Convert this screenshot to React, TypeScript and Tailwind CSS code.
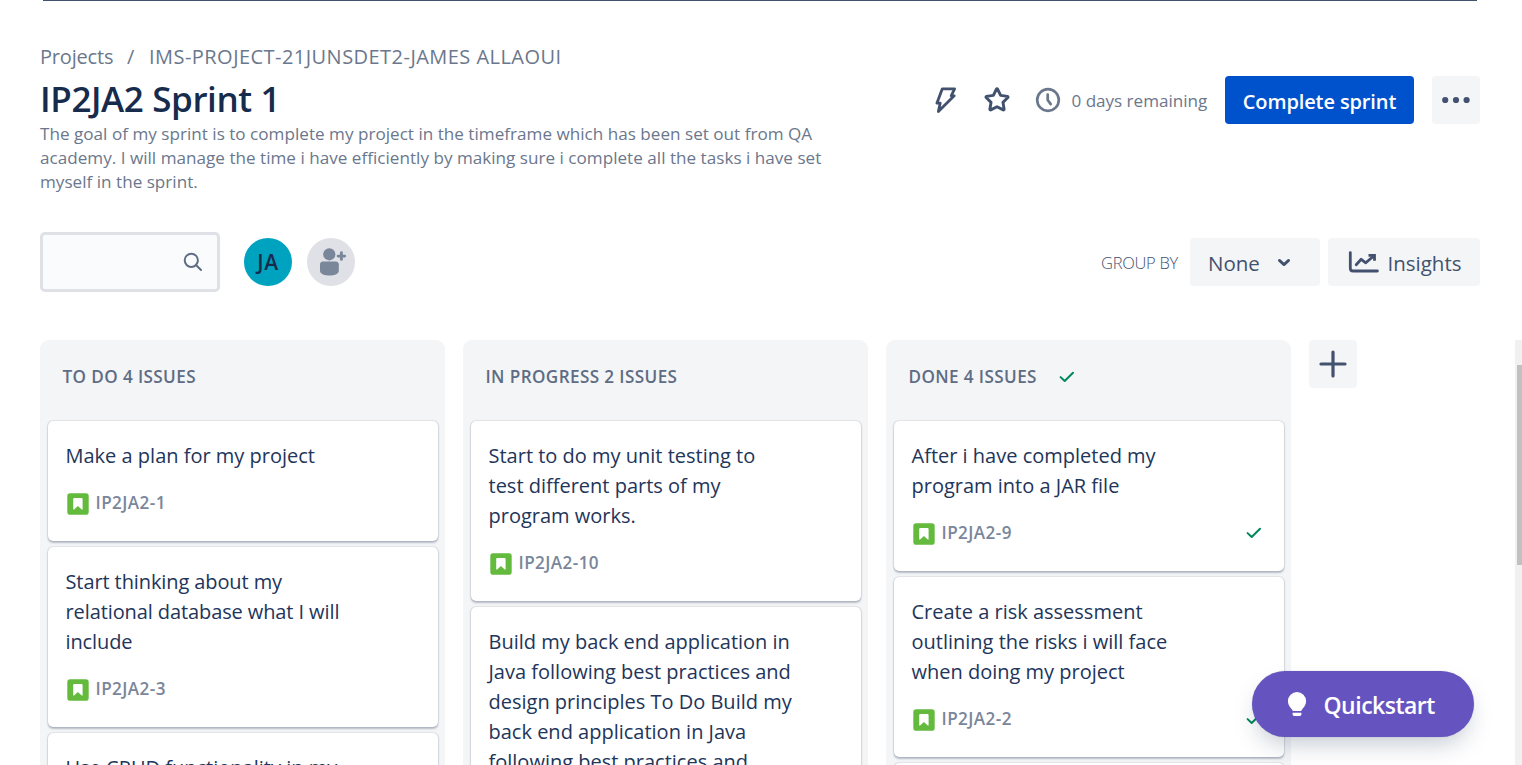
import type { ReactNode } from "react";

type Issue = { id: string; lines: string[]; tight?: boolean };
type ColumnData = { title: string; done?: boolean; issues: Issue[] };

const columns: ColumnData[] = [
  {
    title: "TO DO 4 ISSUES",
    issues: [
      { id: "IP2JA2-1", lines: ["Make a plan for my project"] },
      { id: "IP2JA2-3", tight: true, lines: ["Start thinking about my", "relational database what I will", "include"] },
      { id: "", lines: ["Use CRUD functionality in my"] },
    ],
  },
  {
    title: "IN PROGRESS 2 ISSUES",
    issues: [
      { id: "IP2JA2-10", lines: ["Start to do my unit testing to", "test different parts of my", "program works."] },
      {
        id: "",
        lines: [
          "Build my back end application in",
          "Java following best practices and",
          "design principles To Do Build my",
          "back end application in Java",
          "following best practices and",
        ],
      },
    ],
  },
  {
    title: "DONE 4 ISSUES",
    done: true,
    issues: [
      { id: "IP2JA2-9", lines: ["After i have completed my", "program into a JAR file"] },
      {
        id: "IP2JA2-2",
        lines: ["Create a risk assessment", "outlining the risks i will face", "when doing my project"],
      },
      { id: "", lines: [] },
    ],
  },
];

function Check() {
  return (
    <svg width="16" height="12" viewBox="0 0 16 12" fill="none" stroke="#00875a" strokeWidth="2" strokeLinecap="round" strokeLinejoin="round">
      <path d="M1.6 6.1 5.7 10 14 1.8" />
    </svg>
  );
}

function StoryIcon() {
  return (
    <svg width="22" height="22" viewBox="0 0 22 22">
      <rect x="0.3" y="0.3" width="21.4" height="21.4" rx="2.8" fill="#63ba3c" />
      <path d="M6.2 16.1V6.3c0-.8.5-1.3 1.3-1.3h6.8c.8 0 1.3.5 1.3 1.3v9.8c0 .5-.5.7-.9.4L10.9 13l-3.8 3.5c-.4.3-.9.1-.9-.4z" fill="#fff" />
    </svg>
  );
}

function Card({ issue, done }: { issue: Issue; done?: boolean }) {
  return (
    <article className="rounded-[5px] bg-white pt-5 pb-6 pl-[17.5px] pr-[22px] shadow-[0_1.5px_2px_rgba(9,30,66,0.25),0_0_1.5px_rgba(9,30,66,0.31)]">
      <div className={`text-[20px] leading-[30px] whitespace-nowrap text-[#22355a] ${issue.tight ? "tracking-[-0.1px]" : "tracking-normal"}`}>
        {issue.lines.map((line, i) => (
          <div key={i}>{line}</div>
        ))}
      </div>
      <div className="mt-[19px] flex h-[27px] items-center justify-between">
        <div className="flex items-center gap-[6.5px] pl-[1.5px]">
          <StoryIcon />
          <span className="pb-[2px] text-[17.1px] leading-[25px] font-semibold tracking-[0.42px] text-[#7a869a]">{issue.id}</span>
        </div>
        {done && (
          <span className="pb-[2px]">
            <Check />
          </span>
        )}
      </div>
    </article>
  );
}

function Column({ column }: { column: ColumnData }) {
  return (
    <section className="w-[405px] shrink-0 rounded-t-[9px] bg-[#f4f5f7] px-2">
      <header className="flex h-[81px] items-start gap-[22px] pt-[25px] pl-[14.5px]">
        <h2 className="text-[17.1px] leading-6 font-semibold tracking-[0.4px] text-[#5e6c84]">{column.title}</h2>
        {column.done && (
          <span className="flex h-6 items-center">
            <Check />
          </span>
        )}
      </header>
      <div className="flex w-[390px] flex-col gap-1.5">
        {column.issues.map((issue, i) => (
          <Card key={i} issue={issue} done={column.done} />
        ))}
      </div>
    </section>
  );
}

function GreyButton({ className, children }: { className: string; children: ReactNode }) {
  return (
    <button className={`flex h-12 items-center rounded-[4px] bg-[#f4f5f7] text-[20.5px] leading-[48px] font-medium text-[#42526e] ${className}`}>
      {children}
    </button>
  );
}

export default function App() {
  return (
    <div className="relative flex h-[765px] w-[1522px] flex-col overflow-hidden bg-white pl-10 font-['Open_Sans',sans-serif]">
      <div className="ml-[3px] h-px w-[1434px] shrink-0 bg-[#42526e]" />

      <div className="flex h-[231px] w-[1440px] shrink-0 justify-between">
        <div className="pt-[41px]">
          <nav className="flex h-[30px] text-[20px] leading-[30px] text-[#6b778c]">
            <span className="w-[87px] tracking-[-0.19px]">Projects</span>
            <span className="w-[22px]">/</span>
            <span className="tracking-[0.46px]">IMS-PROJECT-21JUNSDET2-JAMES ALLAOUI</span>
          </nav>
          <h1 className="mt-1 h-[46px] text-[35px] leading-[45px] font-semibold tracking-[-0.4px] text-[#172b4d]">
            IP2JA2 Sprint 1
          </h1>
          <p className="text-[17.1px] leading-6 tracking-[0.015px] whitespace-nowrap text-[#6b778c]">
            The goal of my sprint is to complete my project in the timeframe which has been set out from QA
            <br />
            academy. I will manage the time i have efficiently by making sure i complete all the tasks i have set
            <br />
            myself in the sprint.
          </p>
        </div>

        <div className="mt-[75px] flex h-12 items-center">
          <svg className="mr-[25px]" width="24" height="28" viewBox="0 0 24 28" fill="none" stroke="#42526e" strokeWidth="2.8" strokeLinejoin="round">
            <path d="M8.3 2.8H20.6L17.2 9.8H20.2L4.4 25.4L6.2 17.2H2.9Z" />
          </svg>
          <svg className="mr-6" width="28" height="28" viewBox="0 0 24 24" fill="none" stroke="#42526e" strokeWidth="2.5" strokeLinejoin="round">
            <path d="M11.5 2.6a.6.6 0 0 1 1 0l2.6 5.4 5.9.9a.6.6 0 0 1 .3 1l-4.2 4.1 1 5.9a.6.6 0 0 1-.8.6L12 17.8l-5.3 2.7a.6.6 0 0 1-.8-.6l1-5.9-4.2-4.1a.6.6 0 0 1 .3-1l5.9-.9z" />
          </svg>
          <svg className="mr-[10.500px]" width="26" height="26" viewBox="0 0 26 26" fill="none" stroke="#6b778c" strokeWidth="2.7" strokeLinecap="round">
            <circle cx="13" cy="13" r="10.8" />
            <path d="M12.7 7.6V13l3 4.1" strokeLinejoin="round" />
          </svg>
          <span className="mr-[18px] w-[135.500px] pt-0.5 text-[17.1px] leading-6 tracking-[-0.03px] whitespace-nowrap text-[#6b778c]">0 days remaining</span>
          <button className="mr-[18px] h-12 w-[189px] rounded-[4px] bg-[#0052cc] pt-[3px] text-[20px] leading-[45px] font-semibold tracking-[-0.12px] text-white">
            Complete sprint
          </button>
          <GreyButton className="w-12 justify-center">
            <svg width="30" height="8" viewBox="0 0 30 8" fill="#42526e">
              <circle cx="4.2" cy="4" r="3.1" />
              <circle cx="15" cy="4" r="3.1" />
              <circle cx="25.6" cy="4" r="3.1" />
            </svg>
          </GreyButton>
        </div>
      </div>

      <div className="flex h-[60px] w-[1440px] shrink-0 items-center">
        <div className="mr-6 flex h-[60px] w-[180px] items-center justify-end rounded-[5px] border-[3px] border-[#dfe1e6] bg-[#fafbfc] pr-[14px]">
          <svg width="20" height="20" viewBox="0 0 20 20" fill="none" stroke="#5e6c84" strokeWidth="2" strokeLinecap="round">
            <circle cx="8.3" cy="8.3" r="6.6" />
            <path d="m13.2 13.2 4.8 4.8" />
          </svg>
        </div>
        <div className="mr-[15px] flex size-12 items-center justify-center rounded-full bg-[#00a3bf] text-[21px] leading-none font-semibold tracking-[0.6px] text-[#172b4d]">
          JA
        </div>
        <svg width="48" height="48" viewBox="0 0 48 48">
          <circle cx="24" cy="24" r="24" fill="#dfe1e6" />
          <g fill="#7a869a">
            <circle cx="22.3" cy="16.3" r="6.1" />
            <path d="M13 26.3c0-1.7 1.3-2.8 2.9-2.8h13c1.6 0 2.9 1.1 2.9 2.8v6.4c0 3.3-5 4.9-9.4 4.9S13 36 13 32.7z" />
          </g>
          <path d="M34.400 14.800v6.600M31.100 18.100h6.600" stroke="#7a869a" strokeWidth="2.900" strokeLinecap="round" />
        </svg>

        <span className="ml-auto mr-3 w-[77px] pt-[2px] text-[16.5px] leading-6 font-light tracking-[-0.28px] whitespace-nowrap text-[#42526e]">
          GROUP BY
        </span>
        <GreyButton className="mr-2 w-[130px] gap-[17px] pl-[18px]">
          <span className="pt-0.5">None</span>
          <svg width="14" height="9" viewBox="0 0 14 9" fill="none" stroke="#42526e" strokeWidth="2.8" strokeLinecap="round" strokeLinejoin="round">
            <path d="M2.4 2.4 7 6.6l4.6-4.2" />
          </svg>
        </GreyButton>
        <GreyButton className="w-[152px] gap-[7.5px] pl-5">
          <svg width="32" height="24" viewBox="0 0 32 24" fill="none" stroke="#42526e" strokeWidth="2.8" strokeLinecap="round" strokeLinejoin="round">
            <path d="M2.3 2.6v15.6c0 1.9.9 2.8 2.8 2.8h24.3" />
            <path d="M8.2 14.8 13.2 9.3l4.6 3.5 7.6-6.6" />
            <path d="M20.5 5.4h6v5.4" strokeLinecap="butt" strokeLinejoin="miter" />
          </svg>
          <span className="pt-0.5">Insights</span>
        </GreyButton>
      </div>

      <main className="mt-12 flex min-h-0 flex-1 gap-[18px] overflow-hidden">
        {columns.map((column) => (
          <Column key={column.title} column={column} />
        ))}
        <GreyButton className="w-12 justify-center">
          <svg width="28" height="28" viewBox="0 0 28 28" stroke="#42526e" strokeWidth="3.2" strokeLinecap="round">
            <path d="M14 2v24M2 14h24" />
          </svg>
        </GreyButton>
        <div className="ml-auto w-[7px] bg-[#f1f1f1] pt-[25px] pl-0.5">
          <div className="h-[200px] bg-[#c1c1c1]" />
        </div>
      </main>

      <button className="absolute right-12 bottom-7 flex h-[66px] w-[222px] items-center gap-[16.5px] rounded-full bg-[#6554c0] pl-[35px] text-[23px] leading-none font-semibold tracking-[-0.5px] text-white shadow-[0_12px_24px_-6px_rgba(9,30,66,0.25),0_0_1px_rgba(9,30,66,0.31)]">
        <svg width="20" height="26" viewBox="0 0 20 26" fill="#fff">
          <path d="M10 1a9.1 9.1 0 0 0-9.1 9.1c0 3.2 1.6 5.5 3.3 7.4.6.7 1 1.3 1.3 2.1.1.3.3.4.6.4h7.8c.3 0 .5-.1.6-.4.3-.8.7-1.4 1.3-2.1 1.700-1.900 3.300-4.200 3.300-7.400A9.100 9.100 0 0 0 10 1z" />
          <path d="M5.6 21.7h8.8v1.600c0 1.100-.7 1.700-1.700 1.700H7.300c-1 0-1.700-.6-1.700-1.700z" />
        </svg>
        <span className="pt-[2px]">Quickstart</span>
      </button>
    </div>
  );
}
